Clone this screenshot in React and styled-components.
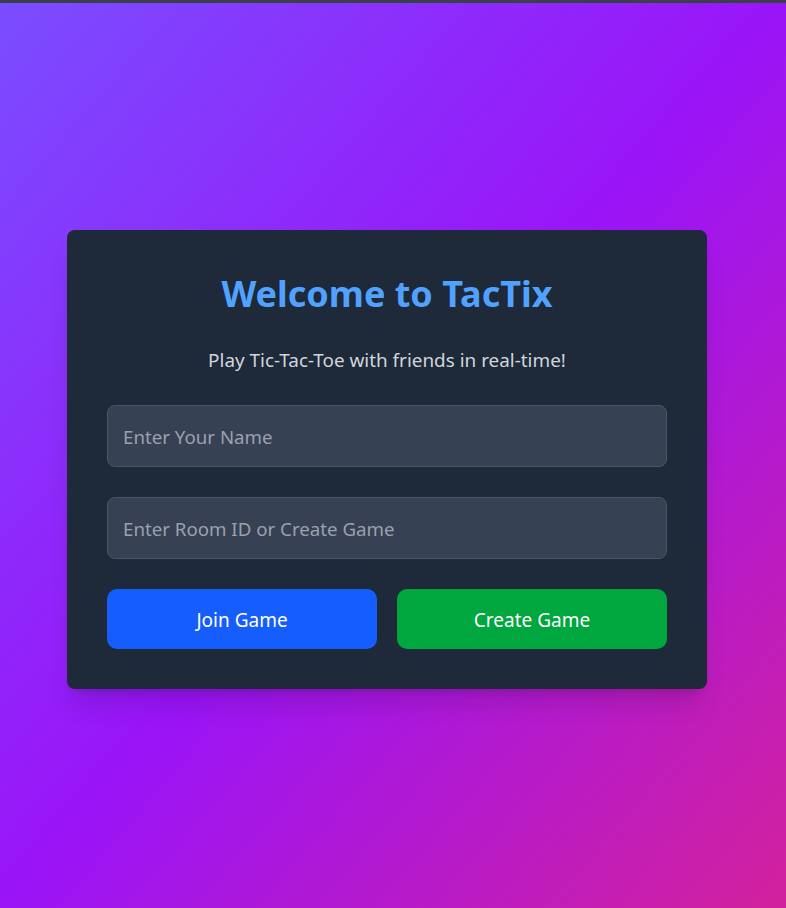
import React from 'react';
import styled, { createGlobalStyle } from 'styled-components';

const GlobalStyle = createGlobalStyle`
    * { box-sizing: border-box; }
    html, body { margin: 0; padding: 0; }
    body {
        font-family: 'Noto Sans', 'Open Sans', sans-serif;
        -webkit-font-smoothing: antialiased;
    }
`;

const Page = styled.div`
    min-height: 100vh;
    border-top: 3px solid #3a4049;
    padding: 8px 12px 0 0;
    display: flex;
    align-items: center;
    justify-content: center;
    background: linear-gradient(to bottom right, #7a4dff 0%, #9a14f8 50%, #d2219c 100%);
`;

const Card = styled.div`
    width: 640px;
    padding: 40px;
    background: #1e2939;
    border-radius: 8px;
    box-shadow: 0 20px 25px -5px rgba(0, 0, 0, 0.12), 0 8px 10px -6px rgba(0, 0, 0, 0.12);
    text-align: center;
`;

const Title = styled.h1`
    margin: 2px 0 30px;
    font-size: 36px;
    line-height: 44px;
    font-weight: 700;
    color: #51a2ff;
`;

const Subtitle = styled.p`
    margin: 0 0 31px;
    font-size: 18.9px;
    line-height: 28px;
    color: #d1d5dc;
`;

const Field = styled.input`
    display: block;
    width: 100%;
    margin-bottom: 30px;
    padding: 17px 15px 15px;
    font-family: inherit;
    font-size: 18.7px;
    line-height: 28px;
    color: #fff;
    background: #364153;
    border: 1px solid #4a5565;
    border-radius: 8px;
    outline: none;

    &::placeholder {
        color: #99a1af;
    }
`;

const Actions = styled.div`
    display: grid;
    grid-template-columns: 1fr 1fr;
    gap: 20px;
`;

const Button = styled.button`
    padding: 17px 16px 15px;
    font-family: inherit;
    font-size: 19px;
    line-height: 28px;
    color: #fff;
    background: ${(p) => (p.$variant === 'green' ? '#00a63e' : '#155dfc')};
    border: none;
    border-radius: 10px;
    cursor: pointer;
`;

const App = () => {
    return (
        <>
            <GlobalStyle />
            <Page>
                <Card>
                    <Title>Welcome to TacTix</Title>
                    <Subtitle>Play Tic-Tac-Toe with friends in real-time!</Subtitle>
                    <Field placeholder="Enter Your Name" />
                    <Field placeholder="Enter Room ID or Create Game" />
                    <Actions>
                        <Button>Join Game</Button>
                        <Button $variant="green">Create Game</Button>
                    </Actions>
                </Card>
            </Page>
        </>
    );
};

export default App;
